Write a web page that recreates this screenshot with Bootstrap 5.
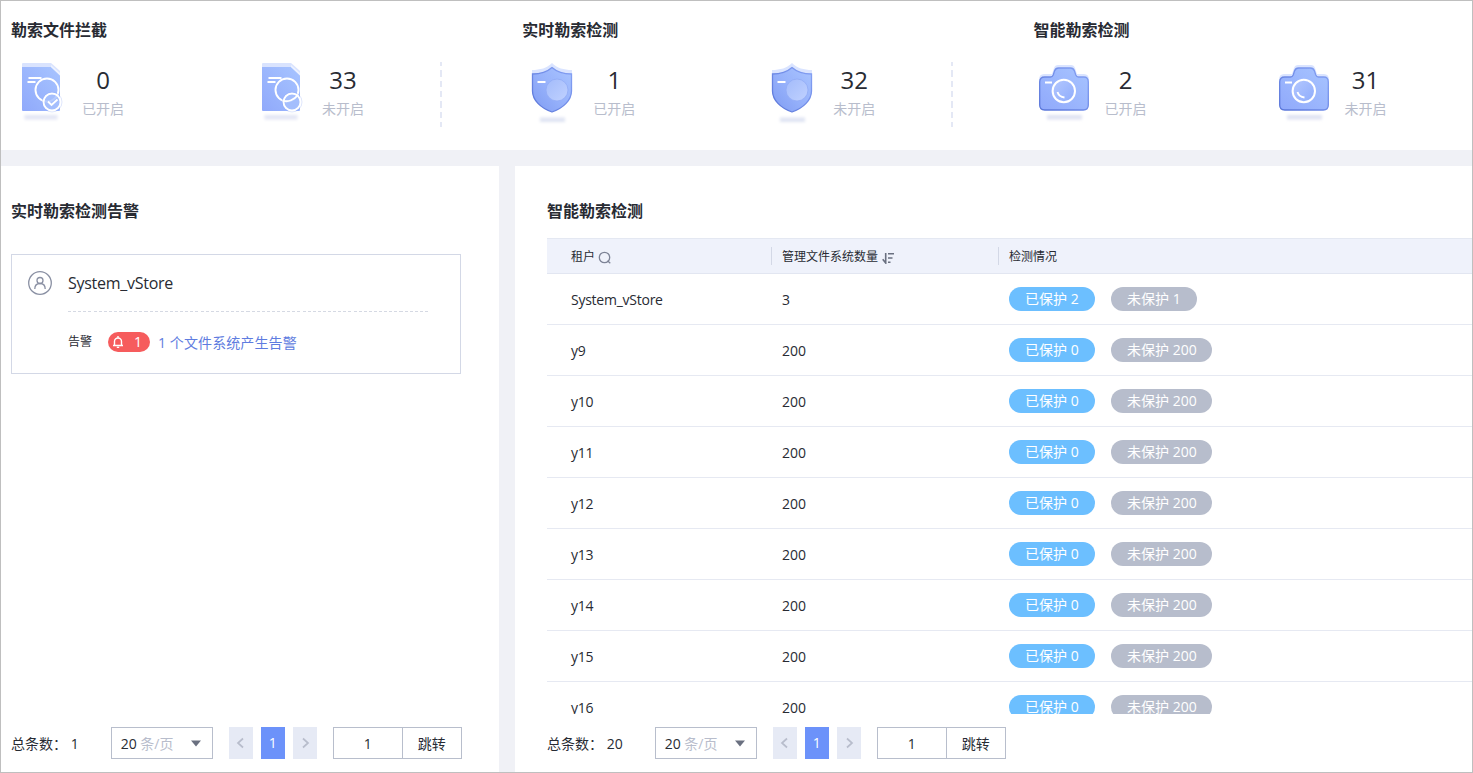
<!DOCTYPE html>
<html lang="zh-CN">
<head>
<meta charset="utf-8">
<meta name="viewport" content="width=device-width, initial-scale=1">
<title>勒索检测</title>
<link href="https://cdn.jsdelivr.net/npm/bootstrap@5.3.0/dist/css/bootstrap.min.css" rel="stylesheet">
<style>
body{font-family:"Open Sans","Noto Sans CJK SC",sans-serif;font-size:14px;line-height:20px;color:#282b33;background:#f0f1f6}
.frame{height:773px;border:1px solid #bfbfbf;gap:16px}
.summary{height:149px;display:grid;grid-template-columns:511.3px 511.3px 1fr;padding-left:10px}
.heading{font-size:16px;font-weight:700;line-height:24px;margin:0}
.summary .heading{padding-top:17px}
.stats{margin-top:20px;height:65px;width:431px}
.stats.divided{border-right:2px dashed transparent;border-image:repeating-linear-gradient(#e4e8f5 0 6px,transparent 6px 9.7px) 2}
.stat{width:240px;flex:none}
.stat+.stat{width:189px}
.stat svg{width:60px;height:64px;flex:none;margin-right:11px}
.figure-no{font-size:24px;line-height:32px;margin-top:2px}
.muted{color:#b8bdcc}
.stat .muted{line-height:20px;margin-top:3px}
.left-pane{width:498px;padding:33px 10px 13px}
.right-pane{padding:33px 0 13px 32px}
.vstore{width:450px;height:120px;border:1px solid #d3d8e6;margin-top:31px;padding:16px 32px 0 16px}
.vname{font-size:16px;line-height:24px;letter-spacing:-.27px}
.vline{height:1px;width:360px;margin:16px 0 20px 40px;background:repeating-linear-gradient(90deg,#d5d9e3 0 3px,transparent 3px 5.1px)}
.alarm{width:42px;height:20px;border-radius:10px;background:#f65c5d;color:#fff;padding:0 8px 0 4px;margin:0 8px 2px 16px}
.small-text{font-size:12px;margin-bottom:2px}
.link-blue{color:#5e7ce0;text-decoration:none;line-height:22px;letter-spacing:.1px}
.grid-wrap{height:476px;overflow:hidden;margin-top:15px}
.grid-table{width:100%;table-layout:fixed;border-collapse:separate;border-spacing:0}
.grid-table th{height:36px;background:#eff2fb;border-top:1px solid #e4e8f2;border-bottom:1px solid #e2e6f1;font-size:12px;font-weight:400;padding:0 0 0 10px;line-height:18px}
.grid-table th:first-child{padding-top:2px}
.grid-table td{height:51px;border-bottom:1px solid #e6e9f2;padding:2px 0 0 10px}
.grid-table td:first-child{letter-spacing:-.25px}
.grid-table tr>:first-child{padding-left:24px}
.grid-table td:last-child{padding-top:0}
.sep{border-left:1px solid #d3d8e6;margin-left:-11px;padding-left:10px;height:18px;line-height:20px}
.sep svg{margin-left:1px}
.pill{display:inline-flex;align-items:center;height:24px;min-width:86px;border-radius:12px;padding:0 15.4px 0 16px;color:#fff;background:#6cbfff;white-space:pre;vertical-align:middle}
.pill+.pill{background:#b7bdcc;margin-left:16px}
.pager{height:32px}
.pager .total{padding-top:2px}
.pick{width:102px;height:32px;border:1px solid #b8becc;padding:2px 10px 0 9px;margin:0 16px 0 32px}
.pg{width:24px;height:32px;background:#e6eaf5;margin-right:8px}
.pg.on{background:#6c92fa;color:#fff}
.jump{width:129px;height:32px;border:1px solid #b8becc;margin-left:8px}
.jump>:first-child{width:69px;flex:none;border-right:1px solid #b8becc}
.jump>*{height:30px;padding-top:2px}
</style>
</head>
<body>
<svg width="0" height="0" class="position-absolute" aria-hidden="true">
<defs>
<linearGradient id="gFill" x1="0" y1="1" x2="1" y2="0"><stop offset="0" stop-color="#90a9fb"/><stop offset="1" stop-color="#a7c4ff"/></linearGradient>
<linearGradient id="gShield" x1="0" y1="1" x2="1" y2="0"><stop offset="0" stop-color="#7f9bf2"/><stop offset=".5" stop-color="#97b2fb"/><stop offset="1" stop-color="#a9c4ff"/></linearGradient>
<linearGradient id="gEdge" x1="0" y1="1" x2="1" y2="0"><stop offset="0" stop-color="#5874d8"/><stop offset="1" stop-color="#86a2f5"/></linearGradient>
<linearGradient id="gDisc" x1="0" y1="0" x2="1" y2="1"><stop offset="0" stop-color="#a3bbfb"/><stop offset="1" stop-color="#c0d1ff"/></linearGradient>
<linearGradient id="gLens" x1="0" y1="0" x2="1" y2="1"><stop offset="0" stop-color="#b4c8ff"/><stop offset="1" stop-color="#8dabfb"/></linearGradient>
<filter id="soft" x="-20%" y="-100%" width="140%" height="300%"><feGaussianBlur stdDeviation="1.5"/></filter>
<symbol id="doc" viewBox="0 0 60 64">
<rect x="13.500" y="53" width="33" height="4.500" fill="#e3e6f4" filter="url(#soft)"/>
<path d="M11 2q0-1 1-1h28l9 8v11H11z" fill="#d9e3fe"/>
<path d="M11 5h29l9 8.500V48q0 1-1 1H12q-1 0-1-1z" fill="url(#gFill)"/>
<path d="M40 5l9 8.500V11l-9-8z" fill="#edf2ff"/>
<path d="M17.500 16h13M16.500 20h8" stroke="#fff" stroke-width="1.900"/>
<circle cx="36" cy="28" r="11.500" fill="none" stroke="#fff" stroke-width="1.900"/>
<circle cx="41" cy="40" r="8.500" fill="#a6bffd" fill-opacity=".82" stroke="#fff" stroke-width="1.900"/>
<circle cx="41" cy="40" r="10" fill="none" stroke="#94adf5" stroke-opacity=".3"/>
</symbol>
<symbol id="shield" viewBox="0 0 60 64">
<rect x="18" y="55.500" width="25" height="4.500" fill="#dfe4f3" filter="url(#soft)"/>
<path d="M30 1c5 5 12 7 20 7v10H10V8c8 0 15-2 20-7z" fill="#dae4ff"/>
<path d="M30 5.500c5 4.500 11 6.500 19.500 6.500v17c0 9-8 17-19.500 21-11.500-4-19.500-12-19.500-21V12c8.500 0 14.500-2 19.500-6.500z" fill="url(#gShield)" stroke="url(#gEdge)" stroke-width="1.300"/>
<circle cx="35" cy="28" r="11" fill="url(#gDisc)" stroke="#91abf5" stroke-width=".8"/>
<path d="M15.500 20h8" stroke="#fff" stroke-width="2"/>
</symbol>
<symbol id="camera" viewBox="0 0 60 64">
<rect x="13" y="53" width="35" height="4.500" fill="#dfe2f2" filter="url(#soft)"/>
<path d="M5 18q0-6 5-6h8l2-6q1-3 4-3h13q3 0 4 3l2 6h7q5 0 5 6v10H5z" fill="#dae4ff"/>
<path d="M5.700 20q0-5 5-5h5.800q2 0 2.700-2l1.300-4q1-3 4-3h12q3 0 4 3l1.300 4q.7 2 2.700 2h5.300q4.500 0 4.500 5v23q0 5-5 5H10.700q-5 0-5-5z" fill="url(#gFill)" stroke="url(#gEdge)" stroke-width="1.300"/>
<circle cx="29.800" cy="29" r="11.200" fill="url(#gLens)" stroke="#fff" stroke-width="2"/>
<path d="M11 20.500h7M23.500 30q1.500 5 7 5.500" stroke="#fff" stroke-width="1.900" fill="none"/>
</symbol>
</defs>
</svg>

<div class="frame d-flex flex-column overflow-hidden">
  <header class="summary bg-white">
    <section>
      <h2 class="heading">勒索文件拦截</h2>
      <div class="stats divided d-flex">
        <div class="stat d-flex"><svg viewBox="0 0 60 64"><use href="#doc"/><path d="M37 39.500l3.500 3.500 6-5.500" stroke="#fff" stroke-width="1.800" fill="none"/></svg><div class="text-center"><div class="figure-no">0</div><div class="muted">已开启</div></div></div>
        <div class="stat d-flex"><svg viewBox="0 0 60 64"><use href="#doc"/><path d="M33 39c4 1 10-1 14-6" stroke="#fff" stroke-width="1.800" fill="none"/></svg><div class="text-center"><div class="figure-no">33</div><div class="muted">未开启</div></div></div>
      </div>
    </section>
    <section>
      <h2 class="heading">实时勒索检测</h2>
      <div class="stats divided d-flex">
        <div class="stat d-flex"><svg><use href="#shield"/></svg><div class="text-center"><div class="figure-no">1</div><div class="muted">已开启</div></div></div>
        <div class="stat d-flex"><svg><use href="#shield"/></svg><div class="text-center"><div class="figure-no">32</div><div class="muted">未开启</div></div></div>
      </div>
    </section>
    <section>
      <h2 class="heading">智能勒索检测</h2>
      <div class="stats d-flex">
        <div class="stat d-flex"><svg><use href="#camera"/></svg><div class="text-center"><div class="figure-no">2</div><div class="muted">已开启</div></div></div>
        <div class="stat d-flex"><svg><use href="#camera"/></svg><div class="text-center"><div class="figure-no">31</div><div class="muted">未开启</div></div></div>
      </div>
    </section>
  </header>

  <main class="d-flex flex-grow-1" style="gap:16px;min-height:0">
    <section class="left-pane bg-white d-flex flex-column flex-shrink-0">
      <h2 class="heading">实时勒索检测告警</h2>
      <div class="vstore">
        <div class="d-flex align-items-center">
          <svg class="flex-shrink-0 me-3" width="24" height="24" fill="none" stroke="#8a90a3" stroke-width="1.300"><circle cx="12" cy="12" r="11.300"/><circle cx="12" cy="9.500" r="3"/><path d="M6.800 18q0-5.500 5.200-5.500t5.200 5.500"/></svg>
          <span class="vname">System_vStore</span>
        </div>
        <div class="vline"></div>
        <div class="d-flex align-items-center" style="margin-left:40px">
          <span class="small-text">告警</span>
          <span class="alarm d-flex align-items-center justify-content-between">
            <svg width="12" height="12" fill="none" stroke="#fff" stroke-width="1.400"><path d="M1 9.500h10M2.500 9.500V5.500a3.500 3.500 0 0 1 7 0v4M6 0v2M4.800 11.400h2.400"/></svg>1
          </span>
          <a href="#" class="link-blue">1 个文件系统产生告警</a>
        </div>
      </div>
      <nav class="pager d-flex align-items-center mt-auto">
        <span class="total">总条数： 1</span>
        <div class="pick d-flex align-items-center"><span>20 <span class="muted">条/页</span></span><svg class="ms-auto" width="12" height="8"><path d="M1 .5h10L6 6.500z" fill="#6a7080"/></svg></div>
        <div class="pg d-flex align-items-center justify-content-center"><svg width="10" height="12" fill="none" stroke="#b8bdcc" stroke-width="1.700"><path d="M7 1.500L2 6l5 4.500"/></svg></div>
        <div class="pg on d-flex align-items-center justify-content-center">1</div>
        <div class="pg d-flex align-items-center justify-content-center"><svg width="10" height="12" fill="none" stroke="#b8bdcc" stroke-width="1.700"><path d="M3 1.500L8 6l-5 4.500"/></svg></div>
        <div class="jump d-flex"><span class="d-flex align-items-center justify-content-center">1</span><span class="d-flex align-items-center justify-content-center flex-grow-1">跳转</span></div>
      </nav>
    </section>

    <section class="right-pane bg-white d-flex flex-column flex-grow-1">
      <h2 class="heading">智能勒索检测</h2>
      <div class="grid-wrap">
        <table class="grid-table">
          <colgroup><col style="width:225px"><col style="width:227px"><col></colgroup>
          <thead><tr>
            <th>租户 <svg width="13" height="13" fill="none" stroke="#7d8396" stroke-width="1.300"><circle cx="6.500" cy="6.500" r="5.200"/><path d="M9.500 9.800l2.800 2.400"/></svg></th>
            <th><div class="sep">管理文件系统数量 <svg width="12" height="12" fill="none" stroke="#6a7080" stroke-width="1.600"><path d="M3.700 1v10L.7 7.300M6 1.800h6M6 6h4.500M6 10.200h2.500"/></svg></div></th>
            <th><div class="sep">检测情况</div></th>
          </tr></thead>
          <tbody>
            <tr><td>System_vStore</td><td>3</td><td><span class="pill">已保护 2</span><span class="pill">未保护 1</span></td></tr>
            <tr><td>y9</td><td>200</td><td><span class="pill">已保护 0</span><span class="pill">未保护 200</span></td></tr>
            <tr><td>y10</td><td>200</td><td><span class="pill">已保护 0</span><span class="pill">未保护 200</span></td></tr>
            <tr><td>y11</td><td>200</td><td><span class="pill">已保护 0</span><span class="pill">未保护 200</span></td></tr>
            <tr><td>y12</td><td>200</td><td><span class="pill">已保护 0</span><span class="pill">未保护 200</span></td></tr>
            <tr><td>y13</td><td>200</td><td><span class="pill">已保护 0</span><span class="pill">未保护 200</span></td></tr>
            <tr><td>y14</td><td>200</td><td><span class="pill">已保护 0</span><span class="pill">未保护 200</span></td></tr>
            <tr><td>y15</td><td>200</td><td><span class="pill">已保护 0</span><span class="pill">未保护 200</span></td></tr>
            <tr><td>y16</td><td>200</td><td><span class="pill">已保护 0</span><span class="pill">未保护 200</span></td></tr>
          </tbody>
        </table>
      </div>
      <nav class="pager d-flex align-items-center mt-auto">
        <span class="total">总条数： 20</span>
        <div class="pick d-flex align-items-center"><span>20 <span class="muted">条/页</span></span><svg class="ms-auto" width="12" height="8"><path d="M1 .5h10L6 6.500z" fill="#6a7080"/></svg></div>
        <div class="pg d-flex align-items-center justify-content-center"><svg width="10" height="12" fill="none" stroke="#b8bdcc" stroke-width="1.700"><path d="M7 1.500L2 6l5 4.500"/></svg></div>
        <div class="pg on d-flex align-items-center justify-content-center">1</div>
        <div class="pg d-flex align-items-center justify-content-center"><svg width="10" height="12" fill="none" stroke="#b8bdcc" stroke-width="1.700"><path d="M3 1.500L8 6l-5 4.500"/></svg></div>
        <div class="jump d-flex"><span class="d-flex align-items-center justify-content-center">1</span><span class="d-flex align-items-center justify-content-center flex-grow-1">跳转</span></div>
      </nav>
    </section>
  </main>
</div>
<script src="https://cdn.jsdelivr.net/npm/bootstrap@5.3.0/dist/js/bootstrap.bundle.min.js"></script>
</body>
</html>
